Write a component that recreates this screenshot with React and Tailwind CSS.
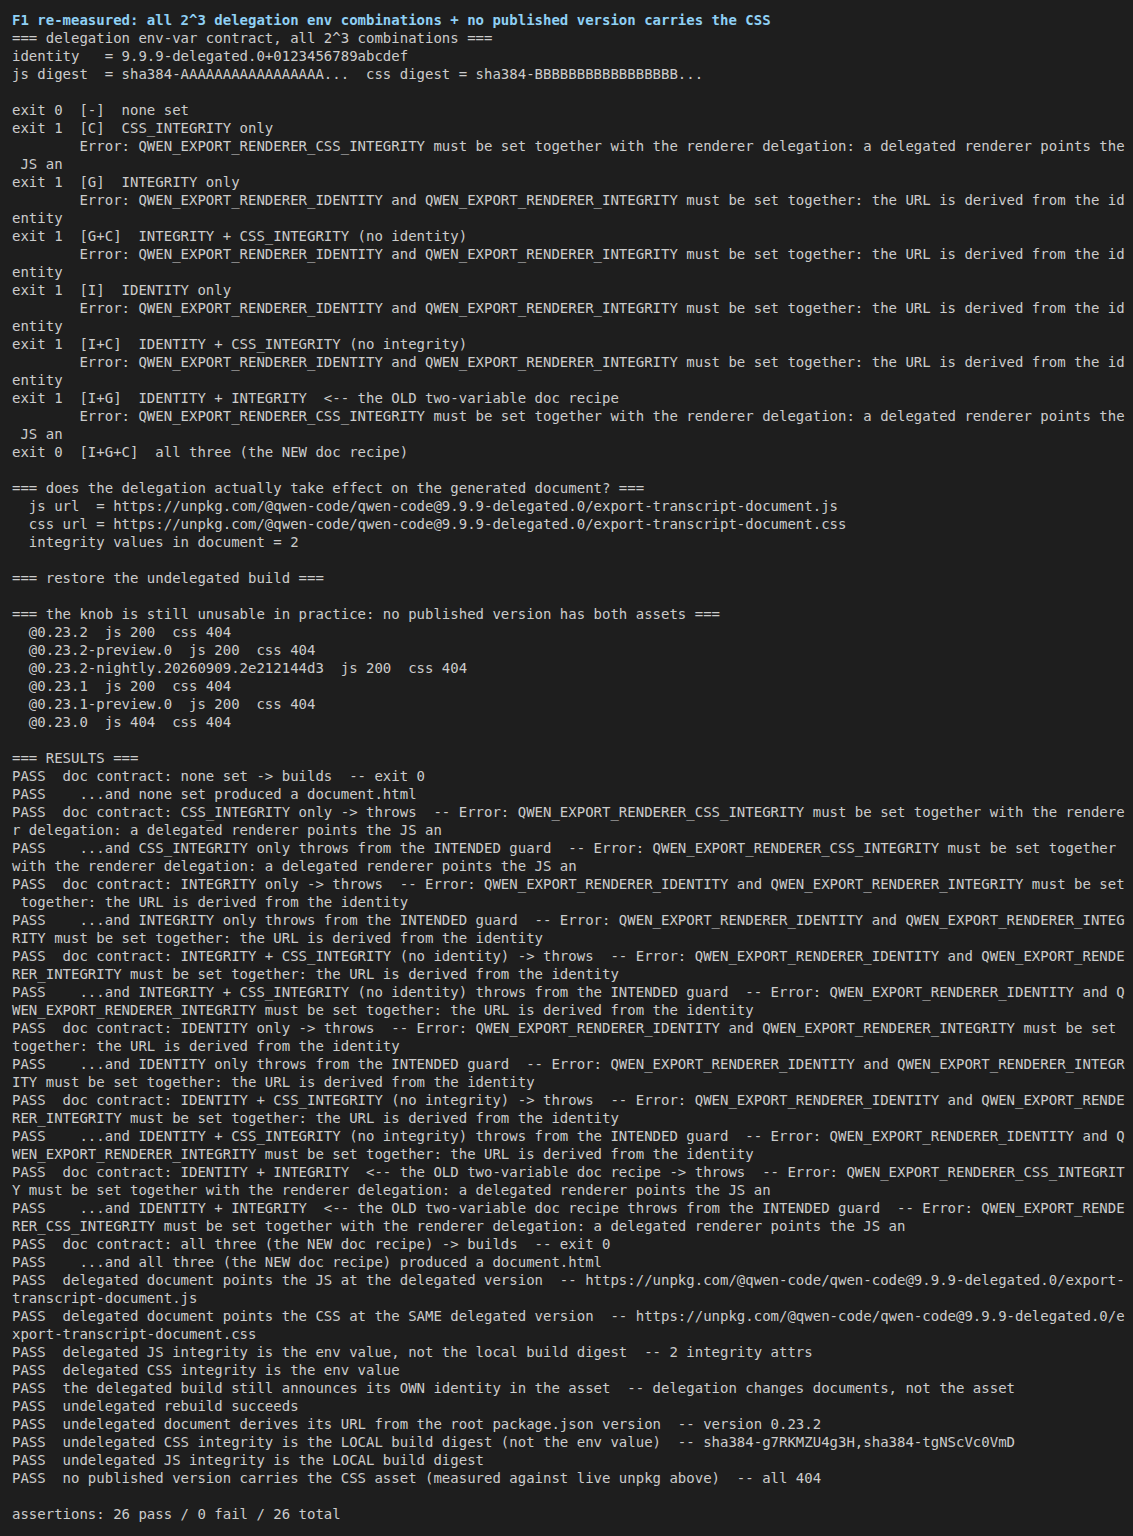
const ERR_CSS =
  '        Error: QWEN_EXPORT_RENDERER_CSS_INTEGRITY must be set together with the renderer delegation: a delegated renderer points the'
const ERR_ID =
  '        Error: QWEN_EXPORT_RENDERER_IDENTITY and QWEN_EXPORT_RENDERER_INTEGRITY must be set together: the URL is derived from the id'

const lines = [
  '=== delegation env-var contract, all 2^3 combinations ===',
  'identity   = 9.9.9-delegated.0+0123456789abcdef',
  'js digest  = sha384-AAAAAAAAAAAAAAAAA...  css digest = sha384-BBBBBBBBBBBBBBBBB...',
  '',
  'exit 0  [-]  none set',
  'exit 1  [C]  CSS_INTEGRITY only',
  ERR_CSS,
  ' JS an',
  'exit 1  [G]  INTEGRITY only',
  ERR_ID,
  'entity',
  'exit 1  [G+C]  INTEGRITY + CSS_INTEGRITY (no identity)',
  ERR_ID,
  'entity',
  'exit 1  [I]  IDENTITY only',
  ERR_ID,
  'entity',
  'exit 1  [I+C]  IDENTITY + CSS_INTEGRITY (no integrity)',
  ERR_ID,
  'entity',
  'exit 1  [I+G]  IDENTITY + INTEGRITY  <-- the OLD two-variable doc recipe',
  ERR_CSS,
  ' JS an',
  'exit 0  [I+G+C]  all three (the NEW doc recipe)',
  '',
  '=== does the delegation actually take effect on the generated document? ===',
  '  js url  = https://unpkg.com/@qwen-code/qwen-code@9.9.9-delegated.0/export-transcript-document.js',
  '  css url = https://unpkg.com/@qwen-code/qwen-code@9.9.9-delegated.0/export-transcript-document.css',
  '  integrity values in document = 2',
  '',
  '=== restore the undelegated build ===',
  '',
  '=== the knob is still unusable in practice: no published version has both assets ===',
  '  @0.23.2  js 200  css 404',
  '  @0.23.2-preview.0  js 200  css 404',
  '  @0.23.2-nightly.20260909.2e212144d3  js 200  css 404',
  '  @0.23.1  js 200  css 404',
  '  @0.23.1-preview.0  js 200  css 404',
  '  @0.23.0  js 404  css 404',
  '',
  '=== RESULTS ===',
  'PASS  doc contract: none set -> builds  -- exit 0',
  'PASS    ...and none set produced a document.html',
  'PASS  doc contract: CSS_INTEGRITY only -> throws  -- Error: QWEN_EXPORT_RENDERER_CSS_INTEGRITY must be set together with the rendere',
  'r delegation: a delegated renderer points the JS an',
  'PASS    ...and CSS_INTEGRITY only throws from the INTENDED guard  -- Error: QWEN_EXPORT_RENDERER_CSS_INTEGRITY must be set together',
  'with the renderer delegation: a delegated renderer points the JS an',
  'PASS  doc contract: INTEGRITY only -> throws  -- Error: QWEN_EXPORT_RENDERER_IDENTITY and QWEN_EXPORT_RENDERER_INTEGRITY must be set',
  ' together: the URL is derived from the identity',
  'PASS    ...and INTEGRITY only throws from the INTENDED guard  -- Error: QWEN_EXPORT_RENDERER_IDENTITY and QWEN_EXPORT_RENDERER_INTEG',
  'RITY must be set together: the URL is derived from the identity',
  'PASS  doc contract: INTEGRITY + CSS_INTEGRITY (no identity) -> throws  -- Error: QWEN_EXPORT_RENDERER_IDENTITY and QWEN_EXPORT_RENDE',
  'RER_INTEGRITY must be set together: the URL is derived from the identity',
  'PASS    ...and INTEGRITY + CSS_INTEGRITY (no identity) throws from the INTENDED guard  -- Error: QWEN_EXPORT_RENDERER_IDENTITY and Q',
  'WEN_EXPORT_RENDERER_INTEGRITY must be set together: the URL is derived from the identity',
  'PASS  doc contract: IDENTITY only -> throws  -- Error: QWEN_EXPORT_RENDERER_IDENTITY and QWEN_EXPORT_RENDERER_INTEGRITY must be set',
  'together: the URL is derived from the identity',
  'PASS    ...and IDENTITY only throws from the INTENDED guard  -- Error: QWEN_EXPORT_RENDERER_IDENTITY and QWEN_EXPORT_RENDERER_INTEGR',
  'ITY must be set together: the URL is derived from the identity',
  'PASS  doc contract: IDENTITY + CSS_INTEGRITY (no integrity) -> throws  -- Error: QWEN_EXPORT_RENDERER_IDENTITY and QWEN_EXPORT_RENDE',
  'RER_INTEGRITY must be set together: the URL is derived from the identity',
  'PASS    ...and IDENTITY + CSS_INTEGRITY (no integrity) throws from the INTENDED guard  -- Error: QWEN_EXPORT_RENDERER_IDENTITY and Q',
  'WEN_EXPORT_RENDERER_INTEGRITY must be set together: the URL is derived from the identity',
  'PASS  doc contract: IDENTITY + INTEGRITY  <-- the OLD two-variable doc recipe -> throws  -- Error: QWEN_EXPORT_RENDERER_CSS_INTEGRIT',
  'Y must be set together with the renderer delegation: a delegated renderer points the JS an',
  'PASS    ...and IDENTITY + INTEGRITY  <-- the OLD two-variable doc recipe throws from the INTENDED guard  -- Error: QWEN_EXPORT_RENDE',
  'RER_CSS_INTEGRITY must be set together with the renderer delegation: a delegated renderer points the JS an',
  'PASS  doc contract: all three (the NEW doc recipe) -> builds  -- exit 0',
  'PASS    ...and all three (the NEW doc recipe) produced a document.html',
  'PASS  delegated document points the JS at the delegated version  -- https://unpkg.com/@qwen-code/qwen-code@9.9.9-delegated.0/export-',
  'transcript-document.js',
  'PASS  delegated document points the CSS at the SAME delegated version  -- https://unpkg.com/@qwen-code/qwen-code@9.9.9-delegated.0/e',
  'xport-transcript-document.css',
  'PASS  delegated JS integrity is the env value, not the local build digest  -- 2 integrity attrs',
  'PASS  delegated CSS integrity is the env value',
  'PASS  the delegated build still announces its OWN identity in the asset  -- delegation changes documents, not the asset',
  'PASS  undelegated rebuild succeeds',
  'PASS  undelegated document derives its URL from the root package.json version  -- version 0.23.2',
  'PASS  undelegated CSS integrity is the LOCAL build digest (not the env value)  -- sha384-g7RKMZU4g3H,sha384-tgNScVc0VmD',
  'PASS  undelegated JS integrity is the LOCAL build digest',
  'PASS  no published version carries the CSS asset (measured against live unpkg above)  -- all 404',
  '',
  'assertions: 26 pass / 0 fail / 26 total',
]

export default function App() {
  return (
    <div className="min-h-screen bg-[#1e1e1e] px-3 pt-[11px] pb-4 font-['DejaVu_Sans_Mono','Liberation_Mono',monospace] text-[14px] leading-[18px] text-[#cccccc]">
      <div className="whitespace-pre font-bold text-[#8fd0f4]">
        F1 re-measured: all 2^3 delegation env combinations + no published version carries the CSS
      </div>
      {lines.map((line, i) => (
        <div key={i} className="h-[18px] whitespace-pre">
          {line}
        </div>
      ))}
    </div>
  )
}
